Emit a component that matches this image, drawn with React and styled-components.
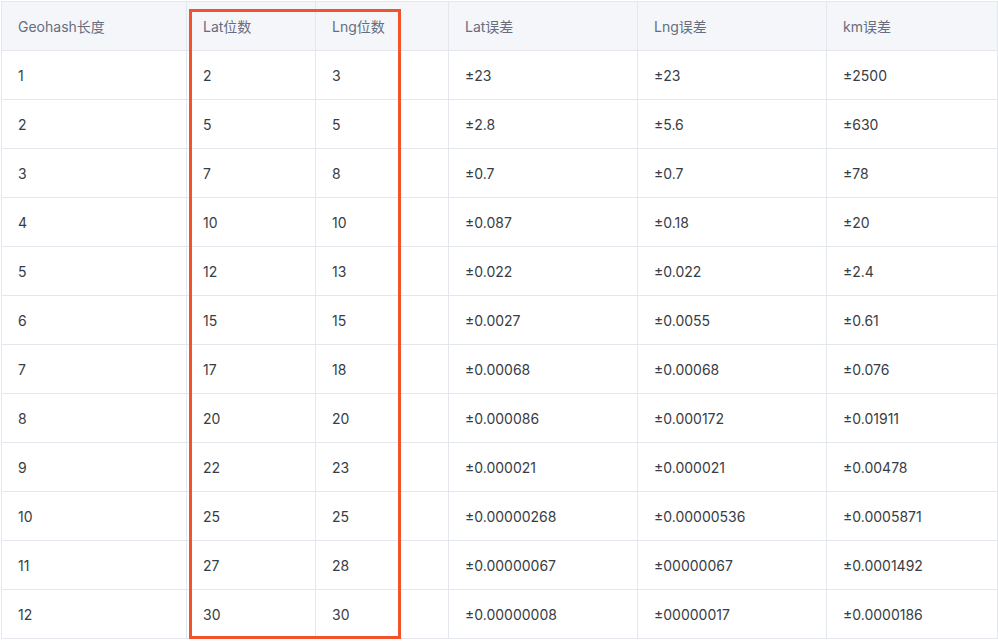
import React from 'react';
import styled, { createGlobalStyle } from 'styled-components';

const GlobalStyle = createGlobalStyle`
  body {
    margin: 0;
    background: #fff;
    font-family: Inter, "Noto Sans CJK SC", sans-serif;
  }
`;

const Page = styled.div`
  padding: 1px 0 0 1px;
`;

const Frame = styled.div`
  position: relative;
  width: 996px;
`;

const Table = styled.table`
  width: 996px;
  border-collapse: collapse;
  table-layout: fixed;
  font-size: 14px;
`;

const Cell = styled.td`
  height: 49px;
  box-sizing: border-box;
  padding: 0 16px;
  border: 1px solid #e4e7ee;
  color: #383c44;
  text-align: left;
  white-space: nowrap;
`;

const HeadCell = styled(Cell).attrs({ as: 'th' })`
  background: #f5f6fa;
  color: #666d7e;
  font-weight: 400;
`;

// 标出 Lat/Lng 位数两列
const Highlight = styled.div`
  position: absolute;
  left: 188px;
  top: 8px;
  width: 212px;
  height: 630px;
  box-sizing: border-box;
  border: 3px solid #f2532a;
  pointer-events: none;
`;

const widths = [185, 129, 133, 189, 189, 171];
const headers = ['Geohash长度', 'Lat位数', 'Lng位数', 'Lat误差', 'Lng误差', 'km误差'];

const rows = [
  ['1', '2', '3', '±23', '±23', '±2500'],
  ['2', '5', '5', '±2.8', '±5.6', '±630'],
  ['3', '7', '8', '±0.7', '±0.7', '±78'],
  ['4', '10', '10', '±0.087', '±0.18', '±20'],
  ['5', '12', '13', '±0.022', '±0.022', '±2.4'],
  ['6', '15', '15', '±0.0027', '±0.0055', '±0.61'],
  ['7', '17', '18', '±0.00068', '±0.00068', '±0.076'],
  ['8', '20', '20', '±0.000086', '±0.000172', '±0.01911'],
  ['9', '22', '23', '±0.000021', '±0.000021', '±0.00478'],
  ['10', '25', '25', '±0.00000268', '±0.00000536', '±0.0005871'],
  ['11', '27', '28', '±0.00000067', '±00000067', '±0.0001492'],
  ['12', '30', '30', '±0.00000008', '±00000017', '±0.0000186'],
];

export default function App() {
  return (
    <Page>
      <GlobalStyle />
      <Frame>
        <Table>
          <colgroup>
            {widths.map((w, i) => <col key={i} style={{ width: w }} />)}
          </colgroup>
          <thead>
            <tr>
              {headers.map((h) => <HeadCell key={h}>{h}</HeadCell>)}
            </tr>
          </thead>
          <tbody>
            {rows.map((r) => (
              <tr key={r[0]}>
                {r.map((v, i) => <Cell key={i}>{v}</Cell>)}
              </tr>
            ))}
          </tbody>
        </Table>
        <Highlight />
      </Frame>
    </Page>
  );
}
